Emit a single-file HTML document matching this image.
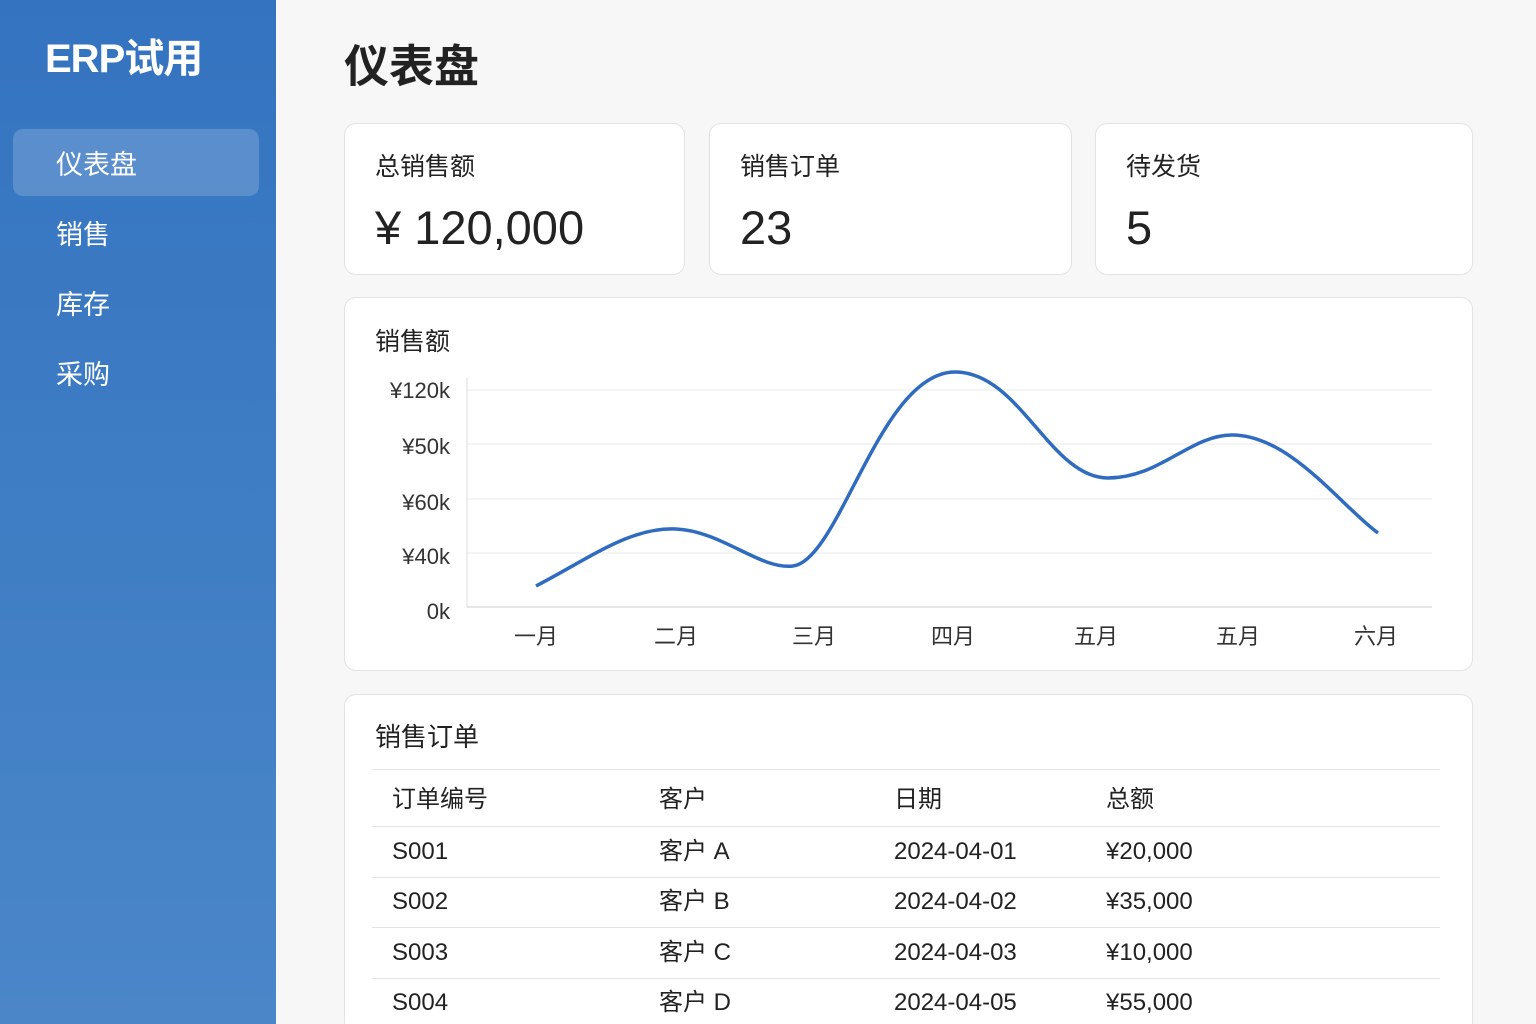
<!DOCTYPE html>
<html><head><meta charset="utf-8"><style>
*{margin:0;padding:0;box-sizing:border-box}
html,body{width:1536px;height:1024px;overflow:hidden}
body{background:#f7f7f7;font-family:"Liberation Sans","Noto Sans CJK SC",sans-serif;color:#222;position:relative;line-height:1.2}
.side{position:absolute;left:0;top:0;width:276px;height:1024px;background:linear-gradient(180deg,#3473c0 0%,#3f7dc4 50%,#4a86c8 100%)}
.logo{position:absolute;left:45px;top:35px;color:#fff;font-size:40px;font-weight:bold;letter-spacing:-1px}
.nav{position:absolute;left:56px;color:#fff;font-size:27px}
.act{position:absolute;left:13px;top:129px;width:246px;height:67px;background:rgba(255,255,255,0.18);border-radius:10px}
.t{position:absolute}
.card{position:absolute;background:#fff;border:1px solid #e3e3e3;border-radius:12px}
.ct{position:absolute;left:30px;top:28px;font-size:25px}
.cv{position:absolute;left:30px;top:76px;font-size:47px}
.row{position:absolute;left:372px;width:1068px;height:1px;background:#e4e4e4}
.cell{position:absolute;font-size:24px;color:#222;line-height:30px;height:30px}
</style></head><body>
<div class="side">
<div class="logo">ERP试用</div>
<div class="act"></div>
<div class="nav" style="top:149px">仪表盘</div>
<div class="nav" style="top:219px">销售</div>
<div class="nav" style="top:289px">库存</div>
<div class="nav" style="top:359px">采购</div>
</div>
<div class="t" style="left:344px;top:40px;font-size:45px;font-weight:bold">仪表盘</div>
<div class="card" style="left:344px;top:123px;width:341px;height:152px"><div class="ct">总销售额</div><div class="cv">¥ 120,000</div></div>
<div class="card" style="left:709px;top:123px;width:363px;height:152px"><div class="ct">销售订单</div><div class="cv">23</div></div>
<div class="card" style="left:1095px;top:123px;width:378px;height:152px"><div class="ct">待发货</div><div class="cv">5</div></div>
<div class="card" style="left:344px;top:297px;width:1129px;height:374px"><div class="ct" style="top:29px">销售额</div></div>
<svg class="t" style="left:0;top:0" width="1536" height="1024">
<g stroke="#e8e8e8" stroke-width="1"><line x1="467" y1="390" x2="1432" y2="390"/><line x1="467" y1="444" x2="1432" y2="444"/><line x1="467" y1="499" x2="1432" y2="499"/><line x1="467" y1="553" x2="1432" y2="553"/></g>
<line x1="467" y1="607" x2="1432" y2="607" stroke="#ccc"/><line x1="467" y1="378" x2="467" y2="607" stroke="#ddd"/>
<g font-size="22" fill="#333" text-anchor="end" font-family="Liberation Sans,Noto Sans CJK SC,sans-serif">
<text x="450" y="398">¥120k</text><text x="450" y="454">¥50k</text><text x="450" y="510">¥60k</text><text x="450" y="564">¥40k</text><text x="450" y="619">0k</text></g>
<g font-size="22" fill="#333" text-anchor="middle" font-family="Liberation Sans,Noto Sans CJK SC,sans-serif">
<text x="536" y="644">一月</text><text x="676" y="644">二月</text><text x="814" y="644">三月</text><text x="953" y="644">四月</text><text x="1096" y="644">五月</text><text x="1238" y="644">五月</text><text x="1376" y="644">六月</text></g>
<path d="M536 586 C590 558 630 527 676 529 C722 531 760 570 793 566 C840 560 880 372 955 372 C1020 372 1050 478 1108 478 C1160 478 1190 435 1232 435 C1290 435 1340 505 1378 533" fill="none" stroke="#2f6cc0" stroke-width="3.5"/>
</svg>
<div class="card" style="left:344px;top:694px;width:1129px;height:340px"><div class="ct" style="top:27px;font-size:26px">销售订单</div></div>
<div class="row" style="top:769px"></div><div class="row" style="top:826px"></div><div class="row" style="top:877px"></div><div class="row" style="top:927px"></div><div class="row" style="top:978px"></div>
<div class="cell" style="left:392px;top:785px">订单编号</div><div class="cell" style="left:659px;top:785px">客户</div><div class="cell" style="left:894px;top:785px">日期</div><div class="cell" style="left:1106px;top:785px">总额</div>
<div class="cell" style="left:392px;top:837px">S001</div><div class="cell" style="left:659px;top:837px">客户 A</div><div class="cell" style="left:894px;top:837px">2024-04-01</div><div class="cell" style="left:1106px;top:837px">¥20,000</div>
<div class="cell" style="left:392px;top:887px">S002</div><div class="cell" style="left:659px;top:887px">客户 B</div><div class="cell" style="left:894px;top:887px">2024-04-02</div><div class="cell" style="left:1106px;top:887px">¥35,000</div>
<div class="cell" style="left:392px;top:938px">S003</div><div class="cell" style="left:659px;top:938px">客户 C</div><div class="cell" style="left:894px;top:938px">2024-04-03</div><div class="cell" style="left:1106px;top:938px">¥10,000</div>
<div class="cell" style="left:392px;top:988px">S004</div><div class="cell" style="left:659px;top:988px">客户 D</div><div class="cell" style="left:894px;top:988px">2024-04-05</div><div class="cell" style="left:1106px;top:988px">¥55,000</div>
</body></html>
